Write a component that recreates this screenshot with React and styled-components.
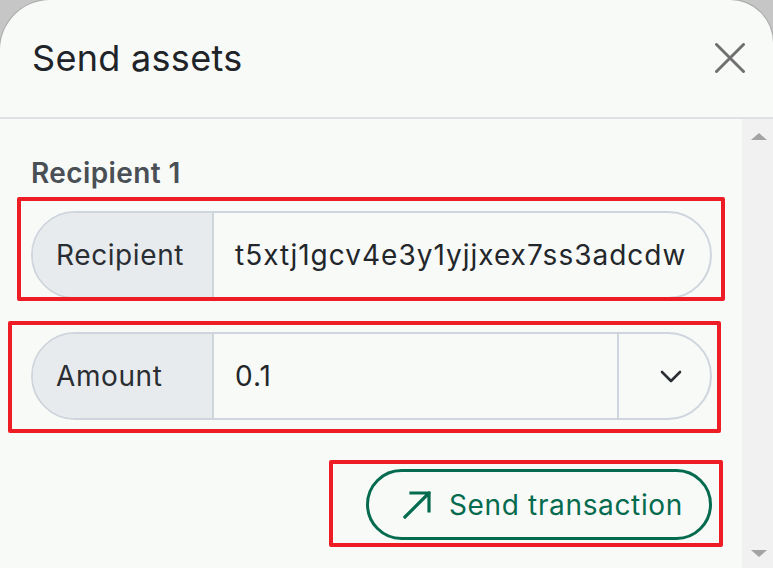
import React from 'react'
import styled, { createGlobalStyle } from 'styled-components'

const Global = createGlobalStyle`
  html, body {
    margin: 0;
    padding: 0;
    height: 100%;
    overflow: hidden;
    background: #c6c6c6;
  }
  * { box-sizing: border-box; }
`

const Modal = styled.div`
  width: 773px;
  height: 568px;
  display: flex;
  flex-direction: column;
  background: #f8faf8;
  border-radius: 50px 43px 0 0;
  box-shadow: 0 0 0 1px #a9a9a9;
  overflow: hidden;
  font-family: Inter, "Noto Sans", sans-serif;
`

const Header = styled.header`
  flex: 0 0 119px;
  display: flex;
  align-items: center;
  justify-content: space-between;
  padding: 0 28px 2px 32px;
  border-bottom: 2px solid #dee2e6;
`

const Title = styled.h2`
  margin: 0;
  font-size: 36px;
  font-weight: 400;
  color: #202428;
  letter-spacing: 0.3px;
`

const Close = styled.button`
  width: 30px;
  height: 30px;
  padding: 0;
  border: 0;
  background: none;
  display: flex;
  cursor: pointer;
`

const Body = styled.div`
  flex: 1;
  display: flex;
  min-height: 0;
`

const Content = styled.div`
  flex: 1;
  padding: 37px 30px 0 31px;
  display: flex;
  flex-direction: column;
`

const Scrollbar = styled.div`
  flex: 0 0 31px;
  background: #f1f1f1;
  display: flex;
  flex-direction: column;
  align-items: center;
  justify-content: space-between;
  padding: 14px 0 11px 2px;
`

const Arrow = styled.span`
  width: 0;
  height: 0;
  border-left: 8px solid transparent;
  border-right: 8px solid transparent;
  ${p => p.$down ? 'border-top: 7px solid #a3a3a3;' : 'border-bottom: 7px solid #a3a3a3;'}
`

const GroupLabel = styled.div`
  font-size: 28px;
  line-height: 34px;
  font-weight: 600;
  color: #4a4f55;
  letter-spacing: 0.4px;
`

const Marked = styled.div`
  position: relative;
  margin-top: ${p => p.$gap}px;
  align-self: ${p => p.$end ? 'flex-end' : 'stretch'};
`

const Mark = styled.div`
  position: absolute;
  top: ${p => p.$t}px;
  right: ${p => p.$r}px;
  bottom: ${p => p.$b}px;
  left: ${p => p.$l}px;
  border: 4px solid #ee1c25;
  border-radius: 2px;
  pointer-events: none;
`

const Field = styled.div`
  display: flex;
  height: 88px;
  border: 2px solid #cfd5dc;
  border-radius: 44px;
  overflow: hidden;
  font-size: 28px;
  color: #23272b;
`

const FieldLabel = styled.div`
  flex: 0 0 181px;
  display: flex;
  align-items: center;
  padding-left: 23px;
  background: #e8ebee;
  border-right: 2px solid #cfd5dc;
  color: #2a2e33;
  letter-spacing: 0.6px;
`

const FieldValue = styled.div`
  flex: 1;
  display: flex;
  align-items: center;
  padding-left: 21px;
  white-space: nowrap;
  overflow: hidden;
  letter-spacing: 1px;
`

const Picker = styled.div`
  flex: 0 0 93px;
  display: flex;
  align-items: center;
  padding-left: 41px;
  border-left: 2px solid #cfd5dc;
`

const SendButton = styled.button`
  height: 71px;
  display: flex;
  align-items: center;
  gap: 18px;
  padding: 0 26px 0 34px;
  border: 3px solid #056b4e;
  border-radius: 36px;
  background: transparent;
  color: #056b4e;
  font-family: inherit;
  font-size: 28px;
  font-weight: 400;
  letter-spacing: 0.65px;
  cursor: pointer;
`

export default function App() {
  return (
    <>
      <Global />
      <Modal>
        <Header>
          <Title>Send assets</Title>
          <Close aria-label="Close">
            <svg width="30" height="30" viewBox="0 0 30 30">
              <path d="M1.5 1.5 L28.5 28.5 M28.5 1.5 L1.5 28.5" stroke="#707070" strokeWidth="3" strokeLinecap="round" />
            </svg>
          </Close>
        </Header>
        <Body>
          <Content>
            <GroupLabel>Recipient 1</GroupLabel>
            <Marked $gap={21}>
              <Field>
                <FieldLabel>Recipient</FieldLabel>
                <FieldValue>t5xtj1gcv4e3y1yjjxex7ss3adcdw</FieldValue>
              </Field>
              <Mark $t={-14} $r={-13} $b={-2} $l={-14} />
            </Marked>
            <Marked $gap={33}>
              <Field>
                <FieldLabel>Amount</FieldLabel>
                <FieldValue>0.1</FieldValue>
                <Picker>
                  <svg width="22" height="13" viewBox="0 0 22 13">
                    <path d="M2 2 L11 11 L20 2" fill="none" stroke="#2b2f33" strokeWidth="2.6" strokeLinecap="round" strokeLinejoin="round" />
                  </svg>
                </Picker>
              </Field>
              <Mark $t={-11} $r={-9} $b={-13} $l={-23} />
            </Marked>
            <Marked $gap={49} $end>
              <SendButton>
                <svg width="28" height="28" viewBox="0 0 28 28">
                  <path d="M2 26 L26 2 M8 2 H26 V20" fill="none" stroke="#056b4e" strokeWidth="3.2" strokeLinecap="square" />
                </svg>
                Send transaction
              </SendButton>
              <Mark $t={-9} $r={-11} $b={-7} $l={-37} />
            </Marked>
          </Content>
          <Scrollbar>
            <Arrow />
            <Arrow $down />
          </Scrollbar>
        </Body>
      </Modal>
    </>
  )
}
